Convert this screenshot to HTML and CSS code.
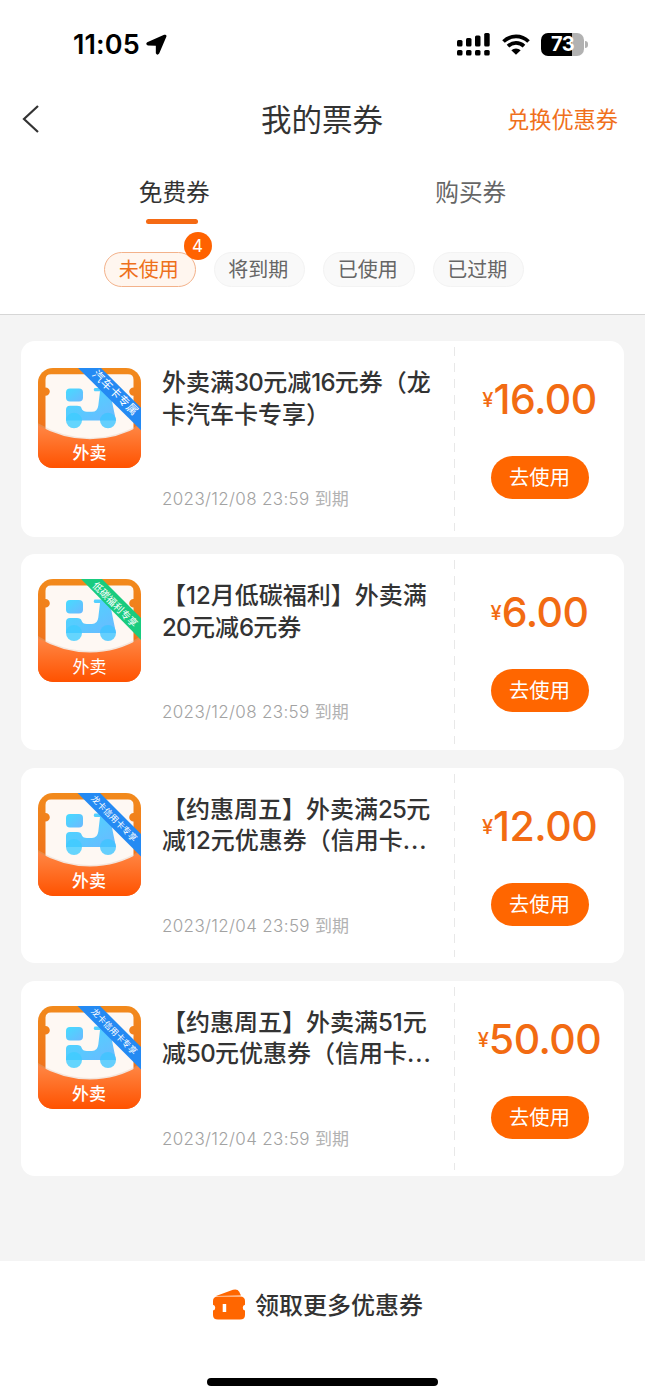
FILE: index.html
```
<!DOCTYPE html>
<html lang="zh-CN">
<head>
<meta charset="utf-8">
<title>我的票券</title>
<link rel="stylesheet" href="styles.css">
</head>
<body>
<svg class="defs" width="0" height="0" aria-hidden="true">
  <defs>
    <linearGradient id="wave" x1="0" y1="0" x2="0" y2="1"><stop offset="0" stop-color="#ff8745"/><stop offset="1" stop-color="#ff5200"/></linearGradient>
    <linearGradient id="edge" x1="0" y1="0" x2="0" y2="1"><stop offset="0" stop-color="#f28a1c"/><stop offset=".5" stop-color="#f0781c"/><stop offset="1" stop-color="#f0601c"/></linearGradient>
    <linearGradient id="bike" x1="0" y1="0" x2="1" y2="1"><stop offset="0" stop-color="#45dcff"/><stop offset="1" stop-color="#6cb8ff"/></linearGradient>
    <clipPath id="tile"><rect width="103" height="103" rx="15"/></clipPath>
    <symbol id="takeout" viewBox="0 0 103 103" preserveAspectRatio="none">
      <rect width="103" height="103" fill="url(#edge)"/>
      <path d="M13 6.500H90Q95.500 6.500 95.500 12V20A4.300 4.300 0 0 0 95.500 28.600V80H7.500V28.600A4.300 4.300 0 0 0 7.500 20V12Q7.500 6.500 13 6.500Z" fill="#fef8f3"/>
      <rect x="28" y="21" width="17" height="13.500" rx="4" fill="url(#bike)"/>
      <path d="M56.500 20.500H67Q71 20.500 72 24.500L75.500 42L78 54H28V43Q28 39 32 39H39Q43 39 43.500 41.500Q44.500 45 49 45H54Q59.500 45 60.300 38.500L62 24H56.500Q54.800 22.200 56.500 20.500Z" fill="url(#bike)"/>
      <circle cx="36" cy="54" r="8" fill="#3fccff" opacity=".8"/>
      <circle cx="70" cy="54" r="8" fill="#3fc4ff" opacity=".8"/>
      <path d="M0 57Q25 72 52 72T103 57V103H0Z" fill="#d9bba8" opacity=".3"/>
      <path d="M0 59Q25 73.500 52 73.500T103 59V103H0Z" fill="url(#wave)"/>
    </symbol>
  </defs>
</svg>

<header class="header">
  <div class="status">
    <div class="clock">11:05
      <svg class="locate" viewBox="0 0 22 22"><path d="M1.300 8.600 19 .8Q22 .2 21.300 3L13.800 20.500Q11.800 23 10.300 20.200V12.300L2 12.100Q-1 10.500 1.300 8.600Z"/></svg>
    </div>
    <div class="indicators">
      <svg class="signal" viewBox="0 0 34 23"><rect x="0" y="7" width="5.500" height="6.500" rx="1.500"/><rect x="9" y="5" width="5.500" height="8.500" rx="1.500"/><rect x="18" y="2.500" width="5.500" height="11" rx="1.500"/><rect x="27.200" y="0" width="5.500" height="13.500" rx="1.500"/><rect x="0" y="17" width="5.500" height="5.500" rx="1.500"/><rect x="9" y="17" width="5.500" height="5.500" rx="1.500"/><rect x="18" y="17" width="5.500" height="5.500" rx="1.500"/><rect x="27.200" y="17" width="5.500" height="5.500" rx="1.500"/></svg>
      <svg class="wifi" viewBox="0 0 28 21"><path d="M1.500 7.500A18 18 0 0 1 26.500 7.500M6 12.200A11.500 11.500 0 0 1 22 12.200" fill="none" stroke="#000" stroke-width="3.700"/><path d="M9.300 16.200A7 7 0 0 1 18.700 16.200L14 20.800Z"/></svg>
      <div class="battery"><span>73</span></div>
      <i class="battery-tip"></i>
    </div>
  </div>
  <nav class="nav">
    <svg class="back" viewBox="0 0 18 30"><path d="M16 2 2 15 16 28"/></svg>
    <h1>我的票券</h1>
    <a class="redeem">兑换优惠券</a>
  </nav>
  <div class="tabs">
    <div class="tab active">免费券</div>
    <div class="tab">购买券</div>
  </div>
  <div class="filters">
    <div class="pill selected">未使用<b class="count">4</b></div>
    <div class="pill">将到期</div>
    <div class="pill">已使用</div>
    <div class="pill">已过期</div>
  </div>
</header>

<main class="list">
  <article class="card">
    <svg class="thumb short" viewBox="0 0 103 103" preserveAspectRatio="none"><g clip-path="url(#tile)"><use href="#takeout" width="103" height="103"/><path class="blue" d="M40 0H63L103 41V64Z"/><text class="ribbon r5" transform="translate(77.500 25.500) rotate(45)">汽车卡专属</text><text class="kind strong" x="51.500" y="94">外卖</text></g></svg>
    <div class="info"><h2>外卖满<span class="num">30</span>元减<span class="num">16</span>元券（龙<br>卡汽车卡专享）</h2><p>2023/12/08 23:59 <span>到期</span></p></div>
    <div class="action"><div class="price"><small>¥</small>16.00</div><a class="use">去使用</a></div>
  </article>
  <article class="card">
    <svg class="thumb" viewBox="0 0 103 103"><g clip-path="url(#tile)"><use href="#takeout" width="103" height="103"/><path class="green" d="M43 0H64L103 39V61Z"/><text class="ribbon r6" transform="translate(77 25.500) rotate(45)">低碳福利专享</text><text class="kind" x="51.500" y="94">外卖</text></g></svg>
    <div class="info"><h2>【12月低碳福利】外卖满<br><span class="num">20</span>元减<span class="num">6</span>元券</h2><p>2023/12/08 23:59 <span>到期</span></p></div>
    <div class="action"><div class="price"><small>¥</small>6.00</div><a class="use">去使用</a></div>
  </article>
  <article class="card">
    <svg class="thumb" viewBox="0 0 103 103"><g clip-path="url(#tile)"><use href="#takeout" width="103" height="103"/><path class="blue" d="M39.500 0H62L103 41V63.500Z"/><text class="ribbon r8" transform="translate(76 25.500) rotate(45)">龙卡信用卡专享</text><text class="kind strong" x="51" y="94">外卖</text></g></svg>
    <div class="info"><h2>【约惠周五】外卖满<span class="num">25</span>元<br>减12元优惠券（信用卡<span class="dots">...</span></h2><p>2023/12/04 23:59 <span>到期</span></p></div>
    <div class="action"><div class="price"><small>¥</small>12.00</div><a class="use">去使用</a></div>
  </article>
  <article class="card">
    <svg class="thumb" viewBox="0 0 103 103"><g clip-path="url(#tile)"><use href="#takeout" width="103" height="103"/><path class="blue" d="M39.500 0H62L103 41V63.500Z"/><text class="ribbon r8" transform="translate(76 25.500) rotate(45)">龙卡信用卡专享</text><text class="kind strong" x="51" y="94">外卖</text></g></svg>
    <div class="info"><h2>【约惠周五】外卖满51元<br>减<span class="num">50</span>元优惠券（信用卡<span class="dots">...</span></h2><p>2023/12/04 23:59 <span>到期</span></p></div>
    <div class="action"><div class="price"><small>¥</small>50.00</div><a class="use">去使用</a></div>
  </article>
</main>

<footer class="footer">
  <div class="more">
    <svg class="tickets" viewBox="0 0 34 31"><path d="M4 7 21 .8Q25.500-.5 27.200 2.800L29 6.500Z"/><path d="M6 7.500H28Q33 7.500 33 12V15.800A3 3 0 0 0 33 21.600V26Q33 30.500 28 30.500H6Q1 30.500 1 26V21.600A3 3 0 0 0 1 15.800V12Q1 7.500 6 7.500Z"/><rect x="10.700" y="15" width="3.500" height="8" fill="#fff"/></svg>
    <span>领取更多优惠券</span>
  </div>
  <div class="home"></div>
</footer>
</body>
</html>
```
FILE: styles.css
```
* { box-sizing: border-box; }
body {
  margin: 0;
  width: 645px;
  height: 1398px;
  display: flex;
  flex-direction: column;
  overflow: hidden;
  background: #f4f4f4;
  color: #333;
  font-family: Inter, "Noto Sans CJK SC", sans-serif;
}
.defs { position: absolute; }
h1, h2, p { margin: 0; font-weight: 400; }

.header { height: 315px; background: #fff; border-bottom: 1px solid #d6d6d6; }
.status {
  height: 88px;
  padding: 0 57px 0 73px;
  display: flex;
  justify-content: space-between;
  align-items: center;
}
.clock {
  display: flex;
  align-items: center;
  gap: 6px;
  font-size: 27px;
  font-weight: 600;
  letter-spacing: 0.1px;
  color: #000;
}
.locate { width: 21px; height: 21px; }
.indicators { display: flex; align-items: center; }
.signal { width: 34px; height: 23px; }
.wifi { width: 28px; height: 21px; margin-left: 11px; }
.battery {
  width: 43px;
  height: 23px;
  margin-left: 11px;
  border-radius: 7px;
  background: linear-gradient(90deg, #000 73%, #b2b2b2 73%);
  color: #fff;
  font-size: 20px;
  font-weight: 700;
  line-height: 23px;
  text-align: center;
  letter-spacing: -0.5px;
}
.battery-tip { width: 3px; height: 7px; margin-left: 1px; border-radius: 0 3px 3px 0; background: #b2b2b2; }

.nav {
  height: 62px;
  padding: 0 27px 0 22px;
  display: grid;
  grid-template-columns: 1fr 125px 1fr;
  align-items: center;
}
.back { width: 18px; height: 30px; fill: none; stroke: #333; stroke-width: 2.200; }
.nav h1 { padding: 2px 0 0 3.500px; font-size: 30.500px; line-height: 44px; white-space: nowrap; }
.redeem { justify-self: end; padding-bottom: 2px; font-size: 22.200px; color: #f0701c; }

.tabs { height: 78px; padding: 0 26px; display: grid; grid-template-columns: 1fr 1fr; }
.tab {
  padding-top: 25px;
  font-size: 23.700px;
  line-height: 36px;
  text-align: center;
  color: #666;
}
.tab.active { color: #333; }
.tab.active::after {
  content: "";
  display: block;
  width: 52px;
  height: 5px;
  margin: 8px auto 0;
  border-radius: 3px;
  background: #f56a14;
  transform: translateX(-2px);
}
.filters { display: flex; justify-content: center; gap: 18px; padding: 24px 17px 0 0; }
.pill {
  position: relative;
  width: 91.500px;
  height: 35px;
  padding-right: 2px;
  border: 1px solid #f3f3f3;
  border-radius: 18px;
  background: #f9f9f9;
  color: #666;
  font-size: 20px;
  line-height: 34px;
  text-align: center;
}
.pill.selected { background: #fff6ef; border-color: #f3b28b; color: #ee701c; }
.count {
  position: absolute;
  top: -21px;
  right: -17px;
  width: 28px;
  height: 28px;
  border-radius: 50%;
  background: #ff6200;
  color: #fff;
  font-size: 17px;
  font-weight: 400;
  line-height: 28px;
}

.list { height: 946px; padding: 26px 21px 0; display: flex; flex-direction: column; gap: 17.800px; }
.card {
  height: 195.500px;
  display: flex;
  border-radius: 14px;
  background: #fff;
}
.thumb { flex: none; width: 103px; height: 103px; margin: 25px 0 0 17px; }
.thumb.short { height: 100px; margin-top: 27px; }
.blue { fill: #248af3; }
.green { fill: #19cb7f; }
.ribbon, .kind { fill: #fff; text-anchor: middle; }
.ribbon { dominant-baseline: central; }
.r5 { font-size: 11.500px; letter-spacing: 0.500px; }
.r6 { font-size: 9.800px; }
.r8 { font-size: 8.700px; }
.kind { font-size: 17px; }
.kind.strong { font-weight: 500; }
.info { flex: none; width: 313px; padding: 26px 0 0 21px; white-space: nowrap; }
.info h2 { height: 114px; font-size: 24px; font-weight: 500; line-height: 31.500px; }
.num { letter-spacing: -0.7px; }
.dots { letter-spacing: 1px; }
.info p { font-size: 17px; line-height: 36px; color: #a2a2a2; font-weight: 300; letter-spacing: 0.34px; }
.info p span { font-weight: 400; letter-spacing: 0; color: #b2b2b2; }
.action {
  flex: 1;
  display: flex;
  flex-direction: column;
  align-items: center;
  margin: 6px 0;
  padding-left: 1px;
  background: repeating-linear-gradient(#e8e8e8 0 9px, transparent 9px 16px) 0 0 / 1px 100% no-repeat;
}
.price { margin-top: 24px; height: 56px; font-size: 41px; font-weight: 500; line-height: 56px; letter-spacing: -0.5px; color: #f26b12; }
.price small { font-size: 20px; font-weight: 500; letter-spacing: 0; vertical-align: 7px; line-height: 1; }
.use {
  width: 98px;
  height: 43px;
  margin-top: 29px;
  border-radius: 22px;
  background: #ff6600;
  color: #fff;
  font-size: 20.300px;
  line-height: 44px;
  text-align: center;
}

.footer {
  flex: 1;
  background: #fff;
  display: flex;
  flex-direction: column;
  align-items: center;
}
.more { height: 86px; display: flex; align-items: center; gap: 9px; padding-right: 10px; font-size: 24px; font-weight: 500; }
.more span { padding-bottom: 2px; }
.tickets { width: 34px; height: 31px; fill: #ff6600; }
.home { width: 231px; height: 8px; margin-top: 31px; border-radius: 4px; background: #000; }
```
